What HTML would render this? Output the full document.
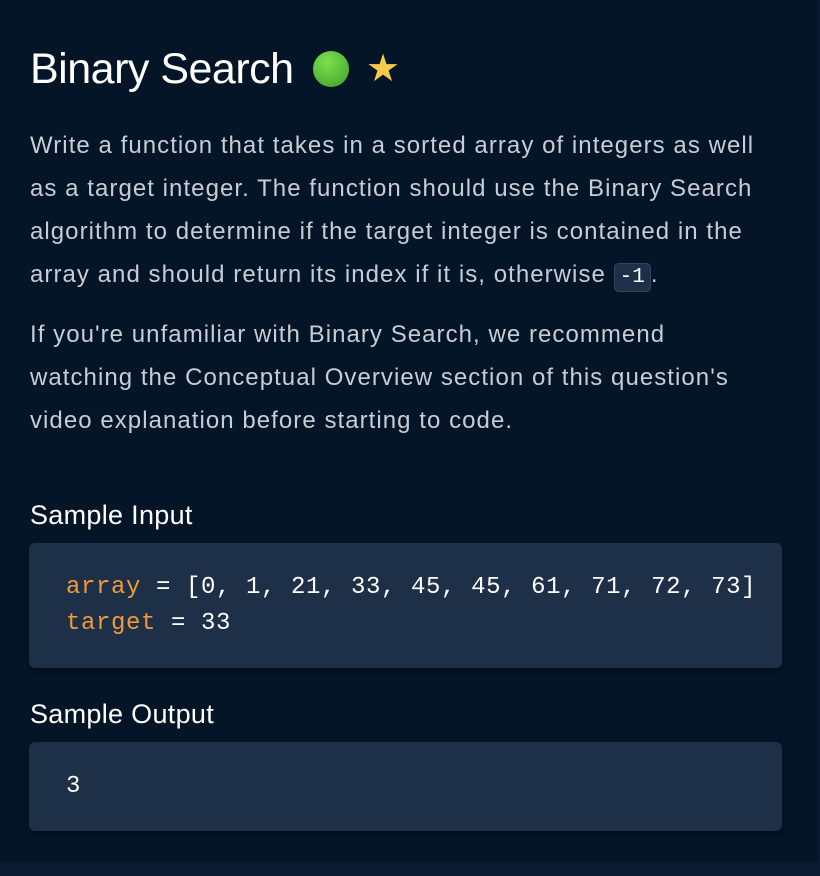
<!DOCTYPE html>
<html><head><style>
html,body{margin:0;padding:0;width:820px;height:876px;overflow:hidden;background:#0c1a31;}
.panel{position:absolute;left:0;top:0;width:818px;height:862px;background:#041528;border-bottom-right-radius:6px;font-family:"Liberation Sans",sans-serif;}
h1{position:absolute;left:30px;top:45px;margin:0;font-size:43px;font-weight:normal;color:#fff;letter-spacing:-0.5px;}
.dot{position:absolute;left:313px;top:51px;width:36px;height:36px;border-radius:50%;background:radial-gradient(circle at 40% 30%,#7be04c,#3f9e2c);}
.star{position:absolute;left:366px;top:46px;font-size:38px;color:#f6c94a;}
p{position:absolute;left:30px;margin:0;color:#c7cdd6;font-size:24px;line-height:43px;letter-spacing:1.05px;}
code.i{background:#1e2f48;border:1px solid #33445e;border-radius:5px;padding:2px 5px;font-family:"Liberation Mono",monospace;color:#fff;font-size:21px;letter-spacing:0;}
h2{position:absolute;left:30px;margin:0;font-size:27px;font-weight:normal;color:#fff;letter-spacing:0.3px;}
.box{position:absolute;left:29px;width:753px;background:#1e2f48;border-radius:6px;box-shadow:0 3px 6px rgba(0,0,0,.4);}
pre{margin:0;position:absolute;left:37px;font-family:"Liberation Mono",monospace;font-size:24px;line-height:36px;color:#fff;letter-spacing:0.6px;}
.o{color:#ef9a3c;}
</style></head><body>
<div class="panel">
<h1>Binary Search</h1>
<div class="dot"></div>
<div class="star">★</div>
<p style="top:124px">Write a function that takes in a sorted array of integers as well<br>as a target integer. The function should use the Binary Search<br>algorithm to determine if the target integer is contained in the<br>array and should return its index if it is, otherwise <code class="i">-1</code>.</p>
<p style="top:313px">If you're unfamiliar with Binary Search, we recommend<br>watching the Conceptual Overview section of this question's<br>video explanation before starting to code.</p>
<h2 style="top:500px">Sample Input</h2>
<div class="box" style="top:543px;height:125px"><pre style="top:27px"><span class="o">array</span> = [0, 1, 21, 33, 45, 45, 61, 71, 72, 73]
<span class="o">target</span> = 33</pre></div>
<h2 style="top:699px">Sample Output</h2>
<div class="box" style="top:742px;height:89px"><pre style="top:27px">3</pre></div>
</div>
</body></html>
